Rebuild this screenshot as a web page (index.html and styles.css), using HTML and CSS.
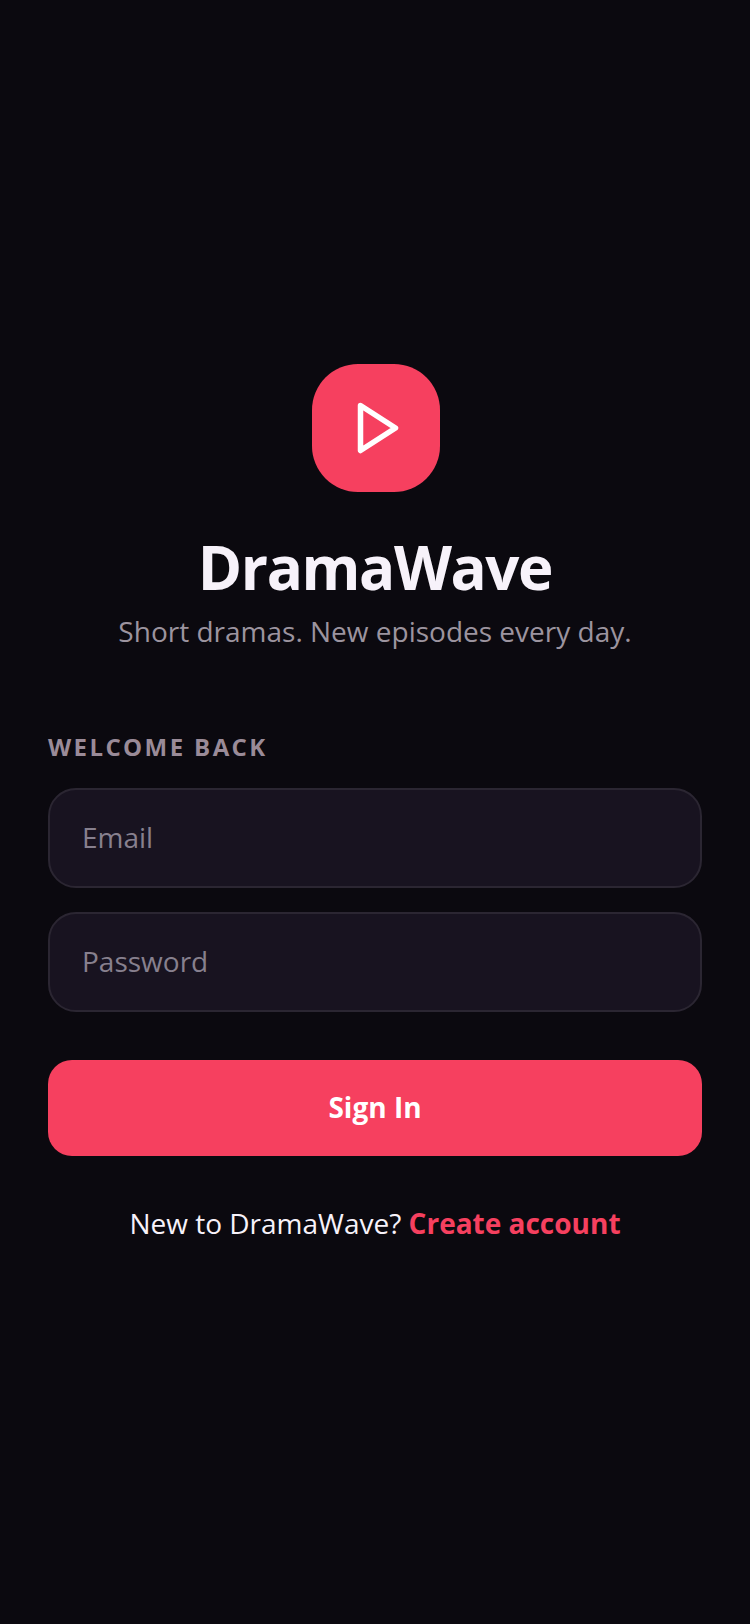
FILE: index.html
```html
<!DOCTYPE html>
<html lang="en">
<head>
    <meta charset="UTF-8">
    <title>DramaWave</title>
    <link rel="stylesheet" href="styles.css">
</head>
<body>
    <div class="container">
        <div class="brand">
            <div class="logo">
                <svg class="play" width="60" height="60" viewBox="0 0 24 24" fill="none">
                    <polygon points="5 3 19 12 5 21" stroke="#fff" stroke-width="2.2" stroke-linejoin="round"/>
                </svg>
            </div>
            <h1>DramaWave</h1>
            <p class="tagline">Short dramas. New episodes every day.</p>
        </div>

        <div class="form">
            <h2>WELCOME BACK</h2>
            <input type="email" placeholder="Email">
            <input type="password" placeholder="Password">
            <button>Sign In</button>
            <p class="signup">New to DramaWave? <a href="#">Create account</a></p>
        </div>
    </div>
</body>
</html>
```

FILE: styles.css
```css
html, body {
    height: 100%;
}
body {
    font-family: 'Open Sans', sans-serif;
    background-color: #0b090f;
    margin: 0;
}
.container {
    box-sizing: border-box;
    height: 1624px;
    padding: 364px 48px 0;
}
.brand {
    display: flex;
    flex-direction: column;
    align-items: center;
}
.logo {
    width: 128px;
    height: 128px;
    margin-left: 2px;
    border-radius: 46px;
    background-color: #f6405f;
    display: flex;
    align-items: center;
    justify-content: center;
}
.play {
    margin-left: 4px;
}
h1 {
    margin: 34px 0 0;
    font-size: 60px;
    line-height: 82px;
    font-weight: 700;
    letter-spacing: -1.4px;
    color: #f7f2fa;
}
.tagline {
    margin: 4px 0 0;
    font-size: 28px;
    line-height: 38px;
    color: #9c949f;
}
.form {
    margin-top: 81px;
    display: flex;
    flex-direction: column;
}
h2 {
    margin: 0 0 25px;
    font-size: 24px;
    line-height: 32px;
    font-weight: 700;
    letter-spacing: 2.4px;
    color: #9a8b98;
}
input {
    box-sizing: border-box;
    height: 100px;
    margin-bottom: 24px;
    padding: 0 32px 2px;
    font-family: inherit;
    font-size: 28px;
    color: #f7f2fa;
    background-color: #181320;
    border: 2px solid #2b2632;
    border-radius: 28px;
}
input::placeholder {
    color: #87808e;
    opacity: 1;
}
button {
    height: 96px;
    margin-top: 24px;
    padding: 0 0 2px;
    font-family: inherit;
    font-size: 28px;
    font-weight: 700;
    color: #fff;
    background-color: #f6405f;
    border: none;
    border-radius: 24px;
}
.signup {
    margin: 48px 0 0;
    font-size: 28px;
    line-height: 38px;
    text-align: center;
    color: #f7f2fa;
}
.signup a {
    font-weight: 700;
    color: #f6405f;
    text-decoration: none;
}
```
